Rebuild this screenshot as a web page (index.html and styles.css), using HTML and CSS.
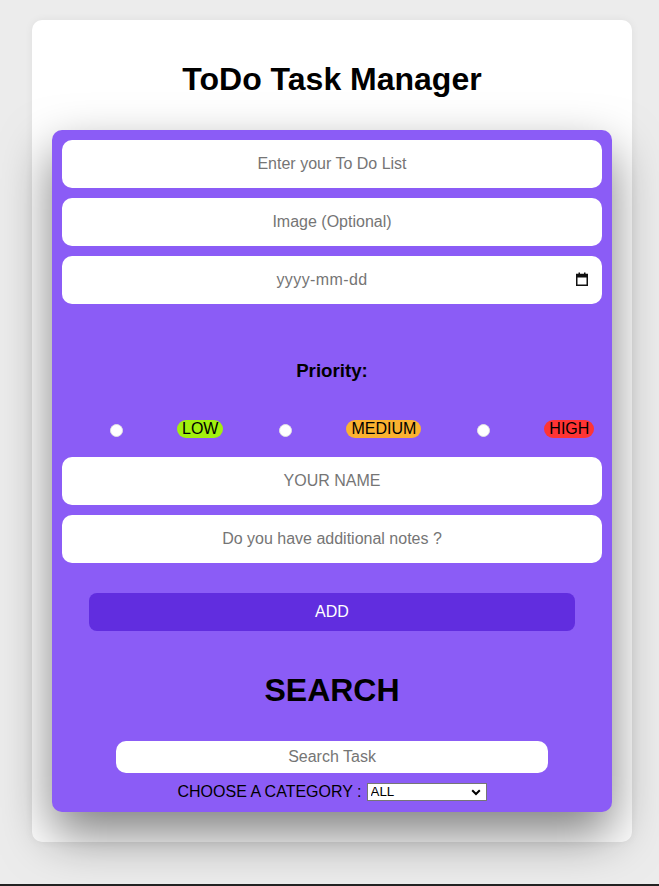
FILE: index.html
```html
<!DOCTYPE html>
<html lang="en">
<head>
<meta charset="utf-8">
<title>ToDo Task Manager</title>
<link rel="stylesheet" href="styles.css">
</head>
<body>
<div class="card">
  <h1 class="title">ToDo Task Manager</h1>
  <div class="panel">
    <input class="field" type="text" placeholder="Enter your To Do List">
    <input class="field" type="text" placeholder="Image (Optional)">
    <div class="date-wrap">
      <input class="field date-field" type="text" placeholder="yyyy-mm-dd">
      <svg class="cal-icon" width="12" height="14" viewBox="0 0 12 14" aria-hidden="true">
        <rect x="0.75" y="2.5" width="10.5" height="10.75" fill="none" stroke="#111" stroke-width="1.5"/>
        <rect x="0.75" y="2.5" width="10.5" height="3" fill="#111"/>
        <rect x="2.5" y="0.5" width="1.5" height="3" fill="#111"/>
        <rect x="8" y="0.5" width="1.5" height="3" fill="#111"/>
      </svg>
    </div>
    <h3 class="priority-title">Priority:</h3>
    <div class="priority-row">
      <input class="radio" type="radio" name="p">
      <span class="badge low">LOW</span>
      <input class="radio" type="radio" name="p">
      <span class="badge medium">MEDIUM</span>
      <input class="radio" type="radio" name="p">
      <span class="badge high">HIGH</span>
    </div>
    <input class="field name-field" type="text" placeholder="YOUR NAME">
    <input class="field" type="text" placeholder="Do you have additional notes ?">
    <button class="add-btn">ADD</button>
    <h1 class="search-title">SEARCH</h1>
    <input class="search-field" type="text" placeholder="Search Task">
    <div class="category-row">
      <span class="category-label">CHOOSE A CATEGORY :</span>
      <div class="select-wrap">
        <select class="category-select">
          <option>ALL</option>
        </select>
        <svg class="chevron" width="10" height="7" viewBox="0 0 10 7" aria-hidden="true">
          <path d="M1.2 1.3 L5 5 L8.8 1.3" fill="none" stroke="#000" stroke-width="2"/>
        </svg>
      </div>
    </div>
  </div>
</div>
<div class="bottom-line"></div>
</body>
</html>
```
FILE: styles.css
```css
html, body {
  margin: 0;
  padding: 0;
}
body {
  background: #ececec;
  font-family: "Liberation Sans", Arial, sans-serif;
  padding-top: 20px;
}
.card {
  width: 600px;
  box-sizing: border-box;
  margin-left: 32px;
  background: #ffffff;
  border-radius: 10px;
  padding: 41px 20px 30px;
  box-shadow: 0 0 8px rgba(0, 0, 0, 0.06);
}
.title {
  margin: 0 0 32px;
  font-size: 32px;
  line-height: 37px;
  font-weight: bold;
  text-align: center;
  color: #000;
}
.panel {
  background: #8b5cf6;
  border-radius: 10px;
  padding: 10px 10px 11px;
  box-shadow: 0 22px 50px rgba(0, 0, 0, 0.5);
}
.field {
  display: block;
  width: 100%;
  box-sizing: border-box;
  height: 48px;
  margin: 0 0 10px;
  border: none;
  border-radius: 10px;
  background: #fff;
  font-family: "Liberation Sans", Arial, sans-serif;
  font-size: 16px;
  text-align: center;
  color: #000;
  outline: none;
  padding: 0 10px;
}
.date-field {
  padding: 0 30px 0 10px;
  letter-spacing: 0.4px;
}
.field::placeholder,
.search-field::placeholder {
  color: #757575;
}
.date-wrap {
  position: relative;
}
.cal-icon {
  position: absolute;
  right: 14px;
  top: 16px;
}
.priority-title {
  margin: 56px 0 0;
  font-size: 18.72px;
  line-height: 22px;
  font-weight: bold;
  text-align: center;
  color: #000;
}
.priority-row {
  display: flex;
  align-items: center;
  gap: 51px;
  padding-left: 43px;
  margin-top: 38px;
  height: 18px;
}
.radio {
  appearance: none;
  -webkit-appearance: none;
  width: 13px;
  height: 13px;
  margin: 3px 3px 0 5px;
  border-radius: 50%;
  background: #fff;
  border: 1px solid #e2e2e2;
  box-sizing: border-box;
  flex: none;
}
.badge {
  display: inline-block;
  padding: 0 5px;
  border-radius: 10px;
  font-size: 16px;
  line-height: 18px;
  color: #000;
}
.low { background: #a2f00e; }
.medium { background: #fbb230; }
.high { background: #ff3434; }
.name-field {
  margin-top: 19px;
}
.add-btn {
  display: block;
  width: 486px;
  height: 38px;
  margin: 30px auto 0;
  border: none;
  border-radius: 8px;
  background: #612ddf;
  color: #fff;
  font-family: "Liberation Sans", Arial, sans-serif;
  font-size: 16px;
}
.search-title {
  margin: 41px 0 0;
  font-size: 32px;
  line-height: 37px;
  font-weight: bold;
  text-align: center;
  color: #000;
}
.search-field {
  display: block;
  width: 432px;
  height: 32px;
  box-sizing: border-box;
  margin: 32px auto 0;
  border: none;
  border-radius: 10px;
  background: #fff;
  font-family: "Liberation Sans", Arial, sans-serif;
  font-size: 16px;
  text-align: center;
  outline: none;
}
.category-row {
  display: flex;
  justify-content: center;
  align-items: center;
  gap: 5px;
  margin-top: 9px;
  height: 19px;
}
.category-label {
  font-size: 16px;
  color: #000;
}
.select-wrap {
  position: relative;
  width: 120px;
  height: 18px;
  margin-top: 1px;
}
.category-select {
  appearance: none;
  -webkit-appearance: none;
  display: block;
  width: 120px;
  height: 18px;
  box-sizing: border-box;
  font-family: "Liberation Sans", Arial, sans-serif;
  font-size: 13.33px;
  line-height: 16px;
  border: 1px solid #767676;
  border-radius: 0;
  background: #fff;
  color: #000;
  padding: 0 0 0 3px;
  margin: 0;
}
.chevron {
  position: absolute;
  right: 6px;
  top: 6px;
  pointer-events: none;
}
.bottom-line {
  margin-top: 42px;
  border-top: 2px solid #222;
}
```
